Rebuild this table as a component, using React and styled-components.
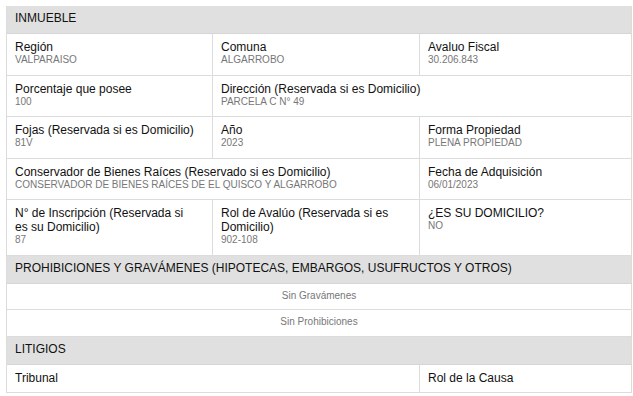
import React from "react";
import styled, { createGlobalStyle } from "styled-components";

const Global = createGlobalStyle`
  html, body { margin: 0; padding: 0; background: #fff; }
  body { font-family: "Liberation Sans", Arial, sans-serif; color: #111; }
`;

const Page = styled.div`
  padding: 6px;
`;

const Sheet = styled.div`
  width: 626px;
  box-sizing: border-box;
  border-left: 1px solid #dcdcdc;
`;

const SectionHead = styled.div`
  background: #e0e0e0;
  padding: 5px 8px 8px;
  font-size: 12px;
  line-height: 14px;
  color: #111;
  border-right: 1px solid #dcdcdc;
  border-bottom: 1px solid #d6d6d6;
`;

const Grid = styled.div`
  display: grid;
  grid-template-columns: 206px 207px 212px;
`;

const Cell = styled.div`
  grid-column: span ${(p) => p.$span || 1};
  padding: 6px 16px ${(p) => (p.$tight ? "7px" : "9px")} 8px;
  border-right: 1px solid #dcdcdc;
  border-bottom: 1px solid #dcdcdc;
`;

const Label = styled.div`
  font-size: 12px;
  line-height: 14px;
  color: #111;
`;

const Value = styled.div`
  font-size: 10px;
  line-height: 11.5px;
  color: #777;
`;

const Notice = styled.div`
  grid-column: 1 / -1;
  text-align: center;
  font-size: 10px;
  line-height: 11.5px;
  color: #777;
  padding: 6px 8px 8px;
  border-right: 1px solid #dcdcdc;
  border-bottom: 1px solid #dcdcdc;
`;

const Field = ({ label, value, span }) => (
  <Cell $span={span}>
    <Label>{label}</Label>
    {value !== undefined && <Value>{value}</Value>}
  </Cell>
);

const inmueble = [
  [
    { label: "Región", value: "VALPARAISO" },
    { label: "Comuna", value: "ALGARROBO" },
    { label: "Avaluo Fiscal", value: "30.206.843" },
  ],
  [
    { label: "Porcentaje que posee", value: "100" },
    { label: "Dirección (Reservada si es Domicilio)", value: "PARCELA C N° 49", span: 2 },
  ],
  [
    { label: "Fojas (Reservada si es Domicilio)", value: "81V" },
    { label: "Año", value: "2023" },
    { label: "Forma Propiedad", value: "PLENA PROPIEDAD" },
  ],
  [
    {
      label: "Conservador de Bienes Raíces (Reservado si es Domicilio)",
      value: "CONSERVADOR DE BIENES RAÍCES DE EL QUISCO Y ALGARROBO",
      span: 2,
    },
    { label: "Fecha de Adquisición", value: "06/01/2023" },
  ],
  [
    { label: "N° de Inscripción (Reservada si es su Domicilio)", value: "87" },
    { label: "Rol de Avalúo (Reservada si es Domicilio)", value: "902-108" },
    { label: "¿ES SU DOMICILIO?", value: "NO" },
  ],
];

export default function App() {
  return (
    <>
      <Global />
      <Page>
        <Sheet>
          <SectionHead>INMUEBLE</SectionHead>
          <Grid>
            {inmueble.flat().map((f) => (
              <Field key={f.label} {...f} />
            ))}
          </Grid>
          <SectionHead>PROHIBICIONES Y GRAVÁMENES (HIPOTECAS, EMBARGOS, USUFRUCTOS Y OTROS)</SectionHead>
          <Grid>
            <Notice>Sin Gravámenes</Notice>
            <Notice>Sin Prohibiciones</Notice>
          </Grid>
          <SectionHead>LITIGIOS</SectionHead>
          <Grid>
            <Cell $span={2} $tight>
              <Label>Tribunal</Label>
            </Cell>
            <Cell $tight>
              <Label>Rol de la Causa</Label>
            </Cell>
          </Grid>
        </Sheet>
      </Page>
    </>
  );
}
